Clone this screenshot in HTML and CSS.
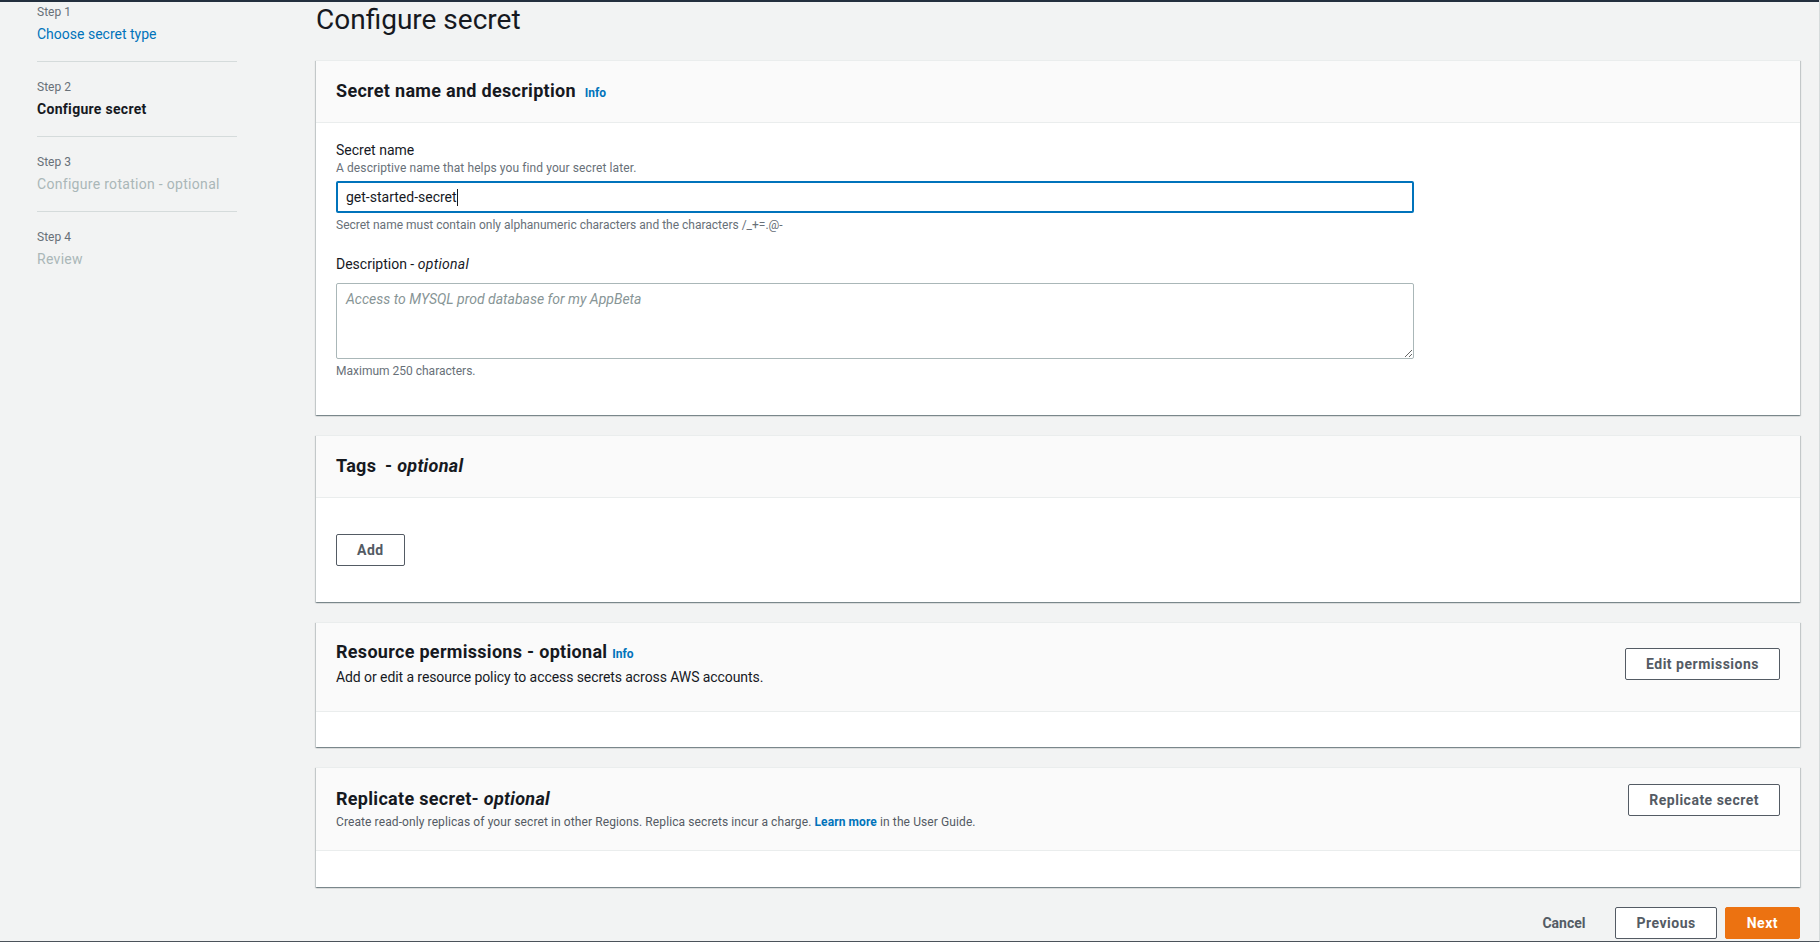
FILE: index.html
```html
<!DOCTYPE html>
<html lang="en">
<head>
<meta charset="utf-8">
<title>Configure secret</title>
<link rel="stylesheet" href="styles.css">
</head>
<body>
<div class="page">
  <div class="topbar"></div>
  <div class="layout">
    <nav class="wizard-nav">
      <ul class="steps">
        <li class="step">
          <div class="step-label">Step 1</div>
          <a class="step-title link" href="#">Choose secret type</a>
        </li>
        <li class="step">
          <div class="step-label">Step 2</div>
          <div class="step-title current">Configure secret</div>
        </li>
        <li class="step">
          <div class="step-label">Step 3</div>
          <div class="step-title disabled">Configure rotation - optional</div>
        </li>
        <li class="step last">
          <div class="step-label">Step 4</div>
          <div class="step-title disabled">Review</div>
        </li>
      </ul>
    </nav>
    <main class="main">
      <h1 class="page-title">Configure secret</h1>

      <section class="card">
        <header class="card-header">
          <h2 class="card-title">Secret name and description <a class="info" href="#">Info</a></h2>
        </header>
        <div class="card-body form-body">
          <div class="field">
            <div class="field-label">Secret name</div>
            <div class="field-desc">A descriptive name that helps you find your secret later.</div>
            <div class="text-input focused"><span class="value">get-started-secret</span><span class="caret"></span></div>
            <div class="field-hint">Secret name must contain only alphanumeric characters and the characters /_+=.@-</div>
          </div>
          <div class="field second">
            <div class="field-label">Description - <i class="opt">optional</i></div>
            <textarea class="textarea" placeholder="Access to MYSQL prod database for my AppBeta"></textarea>
            <div class="field-hint">Maximum 250 characters.</div>
          </div>
        </div>
      </section>

      <section class="card">
        <header class="card-header">
          <h2 class="card-title">Tags <span class="opt-gap">- <i>optional</i></span></h2>
        </header>
        <div class="card-body tags-body">
          <button class="btn">Add</button>
        </div>
      </section>

      <section class="card">
        <header class="card-header split centered perm-header">
          <div class="header-text">
            <h2 class="card-title">Resource permissions - optional <a class="info tight" href="#">Info</a></h2>
            <p class="header-desc">Add or edit a resource policy to access secrets across AWS accounts.</p>
          </div>
          <button class="btn">Edit permissions</button>
        </header>
        <div class="card-body empty"></div>
      </section>

      <section class="card">
        <header class="card-header split top repl-header">
          <div class="header-text">
            <h2 class="card-title">Replicate secret- <i>optional</i></h2>
            <p class="header-desc small">Create read-only replicas of your secret in other Regions. Replica secrets incur a charge. <a class="link strong" href="#">Learn more</a> in the User Guide.</p>
          </div>
          <button class="btn raise">Replicate secret</button>
        </header>
        <div class="card-body empty tall"></div>
      </section>

      <div class="actions">
        <button class="btn link-btn">Cancel</button>
        <button class="btn">Previous</button>
        <button class="btn primary">Next</button>
      </div>
    </main>
  </div>
</div>
</body>
</html>
```

FILE: styles.css
```css
* { box-sizing: border-box; }

html, body {
  margin: 0;
  padding: 0;
}

body {
  background: #f2f3f3;
  font-family: Roboto, "Liberation Sans", Arial, sans-serif;
  color: #16191f;
  font-size: 14px;
  line-height: 20px;
}

.page {
  width: 1820px;
  height: 942px;
  overflow: hidden;
  border-right: 1px solid #d5dbdb;
  border-bottom: 1px solid #4b525a;
}

.topbar {
  height: 2px;
  background: #232f3e;
}

.layout {
  display: grid;
  grid-template-columns: 316px 1484px;
}

/* Sidebar */
.wizard-nav {
  padding-left: 37px;
}

.steps {
  list-style: none;
  margin: 0;
  padding: 0;
  width: 200px;
}

.step {
  padding: 17px 0;
  border-bottom: 1px solid #d5dbdb;
}

.step:first-child { padding-top: 2px; }
.step.last { border-bottom: none; }

.step-label {
  font-size: 12px;
  line-height: 16px;
  color: #687078;
}

.step-title {
  display: block;
  margin-top: 4px;
  font-size: 14px;
  line-height: 20px;
}

.link {
  color: #0073bb;
  text-decoration: none;
}

.step-title.current { font-weight: 700; color: #16191f; letter-spacing: 0.3px; }
.step-title.disabled { color: #aab7b8; letter-spacing: 0.3px; }

/* Main */
.main {
  min-width: 0;
}

.page-title {
  margin: 0 0 22px;
  font-size: 28px;
  line-height: 36px;
  font-weight: 400;
  color: #16191f;
}

.card {
  background: #fff;
  border-top: 1px solid #eaeded;
  box-shadow: 0 1px 1px 0 rgba(0, 28, 36, 0.3), 1px 1px 1px 0 rgba(0, 28, 36, 0.15), -1px 1px 1px 0 rgba(0, 28, 36, 0.15);
  margin-bottom: 20px;
}

.card-header {
  background: #fafafa;
  padding: 19px 20px 20px;
  border-bottom: 1px solid #eaeded;
}

.card-title {
  margin: 0;
  font-size: 18px;
  line-height: 22px;
  font-weight: 700;
  color: #16191f;
  letter-spacing: 0.3px;
}

.card-title i { font-weight: 700; }

.info {
  font-size: 12px;
  line-height: 14px;
  font-weight: 700;
  color: #0073bb;
  text-decoration: none;
  margin-left: 4px;
  letter-spacing: 0;
}

.info.tight { margin-left: 0; }

.opt-gap { margin-left: 4px; }

.card-header.split {
  display: flex;
  justify-content: space-between;
}

.card-header.centered { align-items: center; }
.card-header.top { align-items: flex-start; }

.perm-header { padding: 18px 20px 24px; }
.repl-header { padding: 20px 20px 20px; }

.header-desc {
  margin: 4px 0 0;
  font-size: 14px;
  line-height: 20px;
  color: #16191f;
  letter-spacing: -0.08px;
}

.header-desc.small {
  font-size: 12px;
  line-height: 16px;
  color: #545b64;
  letter-spacing: 0.1px;
}

.link.strong { font-weight: 700; }

.card-body {
  padding: 0 20px;
}

.form-body { padding: 17px 20px 36px; }
.tags-body { padding: 36px 20px; }
.card-body.empty { height: 35px; }
.card-body.empty.tall { height: 36px; }

/* Form */
.field.second { margin-top: 21px; }

.field-label {
  font-size: 14px;
  line-height: 20px;
  color: #16191f;
}

.field-label .opt { letter-spacing: 0.3px; }

.field-desc, .field-hint {
  font-size: 12px;
  line-height: 16px;
  color: #687078;
}

.field-desc { letter-spacing: 0.1px; }

.field-hint { margin-top: 4px; }

.text-input {
  margin-top: 5px;
  width: 1078px;
  height: 32px;
  border: 2px solid #0073bb;
  border-radius: 2px;
  padding: 4px 8px;
  display: flex;
  align-items: center;
  font-size: 14px;
  line-height: 20px;
  color: #16191f;
  background: #fff;
}

.caret {
  display: inline-block;
  width: 1px;
  height: 17px;
  background: #16191f;
}

.textarea {
  display: block;
  margin-top: 9px;
  width: 1078px;
  height: 76px;
  border: 1px solid #aab7b8;
  border-radius: 2px;
  padding: 5px 9px;
  font-family: Roboto, "Liberation Sans", Arial, sans-serif;
  font-size: 14px;
  line-height: 20px;
  color: #16191f;
  background: #fff;
  outline: none;
}

.textarea::placeholder {
  color: #879596;
  font-style: italic;
}

/* Buttons */
.btn {
  display: inline-block;
  font-family: Roboto, "Liberation Sans", Arial, sans-serif;
  font-size: 14px;
  line-height: 20px;
  font-weight: 700;
  color: #545b64;
  background: #fff;
  border: 1px solid #545b64;
  border-radius: 2px;
  padding: 5px 20px;
  height: 32px;
  letter-spacing: 0.5px;
  cursor: pointer;
  white-space: nowrap;
}

.btn.raise { margin-top: -4px; }

.btn.primary {
  background: #ec7211;
  border-color: #ec7211;
  color: #fff;
  padding: 5px 21px;
}

.btn.link-btn {
  border-color: transparent;
  background: transparent;
  letter-spacing: 0;
}

.actions {
  display: flex;
  justify-content: flex-end;
  gap: 8px;
}

.actions .link-btn { margin-right: 1px; }
```
